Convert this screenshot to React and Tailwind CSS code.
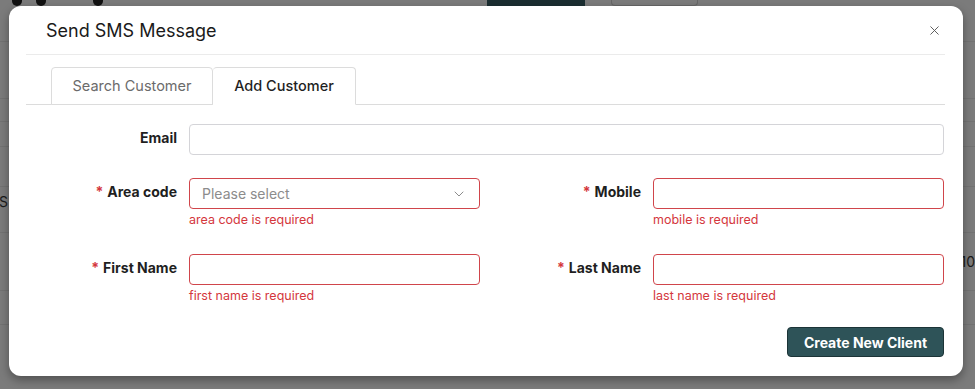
import { X, ChevronDown } from "lucide-react";

const font = { fontFamily: "Inter, 'Noto Sans', sans-serif" };

function Label({ text, required }) {
  return (
    <label className="w-[163px] shrink-0 pr-3 pt-[3px] text-right text-[14px] font-bold text-[#1f1f1f]">
      {required && <span className="mr-1 text-[#d4373d]">*</span>}
      {text}
    </label>
  );
}

function Field({ label, required, error, select }) {
  return (
    <div className="flex flex-1">
      <Label text={label} required={required} />
      <div className="flex-1">
        <div className="flex h-[31px] items-center justify-between rounded-[4px] border border-[#d0454b] bg-white pl-3 pr-[12px]">
          {select && (
            <>
              <span className="text-[14px] text-[#8c8c8c]">Please select</span>
              <ChevronDown className="h-4 w-4 text-[#8c8c8c]" strokeWidth={1.5} />
            </>
          )}
        </div>
        <p className="mt-[3px] text-[12.5px] leading-[16px] text-[#d4373d]">{error}</p>
      </div>
    </div>
  );
}

export default function App() {
  return (
    <div className="relative h-[389px] w-[975px] overflow-hidden bg-[#7b7b7b]" style={font}>
      {/* dimmed page behind the modal */}
      <div className="flex h-[6px] items-end">
        <span className="ml-[12px] h-[6px] w-[10px] rounded-b-full bg-[#111]" />
        <span className="ml-[14px] h-[6px] w-[10px] rounded-b-full bg-[#111]" />
        <span className="ml-[47px] h-[6px] w-[10px] rounded-b-full bg-[#111]" />
        <span className="ml-[384px] h-[6px] w-[98px] bg-[#1b2e31]" />
        <span className="ml-[26px] h-[6px] w-[87px] rounded-b-[4px] border border-t-0 border-[#666]" />
      </div>
      <div className="flex flex-col text-[14px] text-[#1a1a1a]">
        <div className="h-[36px] border-b border-[#727272]" />
        <div className="h-[57px] border-b border-[#727272]" />
        <div className="h-[23px] border-b border-[#727272]" />
        <div className="h-[25px] border-b border-[#727272]" />
        <div className="h-[40px] border-b border-[#727272]" />
        <div className="flex h-[46px] items-center border-b border-[#727272]">
          <span className="-ml-[1px] -mt-[16px]">S</span>
        </div>
        <div className="flex h-[58px] items-center justify-end border-b border-[#727272]">
          <span className="mr-0">10</span>
        </div>
        <div className="h-[34px] border-b border-[#727272]" />
      </div>

      {/* modal */}
      <div className="absolute left-[9px] top-[6px] h-[370px] w-[954px] rounded-[12px] bg-white pl-[17px] pr-[18px] shadow-[0_4px_10px_rgba(0,0,0,0.35)]">
        <div className="flex h-[49px] items-center justify-between border-b border-[#ebebeb] pl-5 pr-[3px]">
          <h2 className="text-[18px] font-normal text-[#1a1a1a]">Send SMS Message</h2>
          <X className="h-[15px] w-[15px] text-[#555]" strokeWidth={1.5} />
        </div>

        <div className="mt-3 flex border-b border-[#dcdcdc] pl-[25px]">
          <div className="-mb-px flex h-[38px] w-[162px] items-center justify-center rounded-t-[4px] border border-[#dcdcdc] bg-white text-[14.5px] text-[#6b6b6b]">
            Search Customer
          </div>
          <div className="-mb-px flex h-[38px] w-[143px] items-center justify-center rounded-t-[4px] border border-l-0 border-[#dcdcdc] border-b-white bg-white text-[14.5px] font-medium text-[#1f1f1f]">
            Add Customer
          </div>
        </div>

        <div className="mt-[19px] flex pr-px">
          <Label text="Email" />
          <div className="h-[31px] flex-1 rounded-[4px] border border-[#d4d4d8] bg-white" />
        </div>

        <div className="mt-[23px] flex gap-[10px] pr-px">
          <Field label="Area code" required error="area code is required" select />
          <Field label="Mobile" required error="mobile is required" />
        </div>

        <div className="mt-[26px] flex gap-[10px] pr-px">
          <Field label="First Name" required error="first name is required" />
          <Field label="Last Name" required error="last name is required" />
        </div>

        <div className="mt-[23px] flex justify-end pr-px">
          <button className="h-[30px] w-[157px] rounded-[4px] border border-[#1c3437] bg-[#2e5358] text-[14px] font-bold text-white">
            Create New Client
          </button>
        </div>
      </div>
    </div>
  );
}
